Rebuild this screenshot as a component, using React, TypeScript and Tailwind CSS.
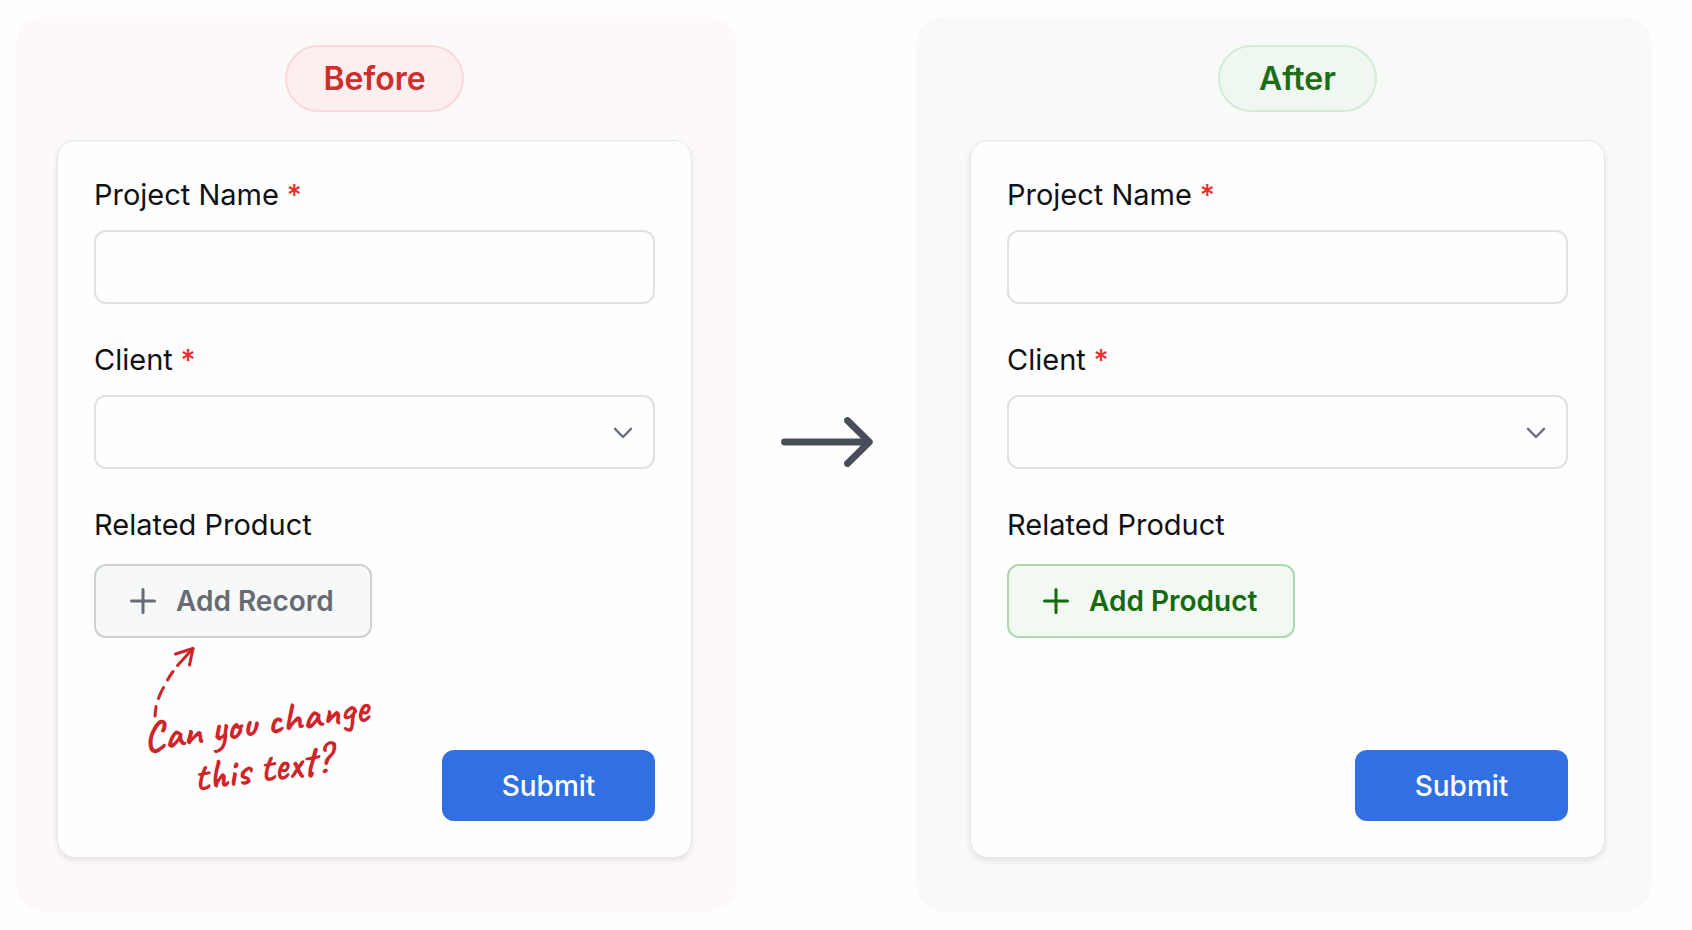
import { useId } from "react";
import type { ReactNode } from "react";

type Tone = "before" | "after";

const panelTone: Record<Tone, string> = {
  before: "bg-[#fdf9f9] pl-[41px] pr-[45px]",
  after: "bg-[#f8faf7] pl-[54px] pr-[47px]",
};

const headerTone: Record<Tone, string> = {
  before: "",
  after: "pl-5",
};

const badgeTone: Record<Tone, string> = {
  before: "border-[#f8dada] bg-[#fdefef] px-9 text-[#cf2e2e]",
  after: "border-[#d4ecd5] bg-[#eef8f0] px-[39px] text-[#1f6b17]",
};

const addTone: Record<Tone, string> = {
  before: "border-[#ced1d5] bg-[#f7f8f8] text-[#666b74]",
  after: "border-[#aed7b0] bg-[#f2f9f3] text-[#17690f]",
};

function Required() {
  return <span className="font-medium text-[#ee2b2b]"> *</span>;
}

function PlusIcon() {
  return (
    <svg width="26" height="26" viewBox="0 0 26 26" fill="none" stroke="currentColor" strokeWidth="3" strokeLinecap="round" aria-hidden="true">
      <path d="M13 1.500v23M1.500 13h23" />
    </svg>
  );
}

function Annotation() {
  return (
    <div className="pointer-events-none absolute left-[50px] top-full text-[#cf2428]">
      <svg className="ml-2 mt-2" width="44" height="74" viewBox="0 0 44 74" fill="none" stroke="currentColor" strokeWidth="3" strokeLinecap="round" strokeLinejoin="round" aria-hidden="true">
        <path d="M3 70 4 60.500M6.500 52.500Q8.500 46.500 11.500 41.500M15.500 34Q18 29.500 21 25.500M25.500 19.500 41 2.500" />
        <path d="M23.500 8 41 2.500 37.500 19" />
      </svg>
      <p className="-mt-5 w-[230px] -rotate-8 whitespace-nowrap text-center font-['Caveat','Lato',cursive] text-[42px] font-bold leading-[46px]">
        Can you change
        <br />
        this text?
      </p>
    </div>
  );
}

function FormCard({ tone, action, children }: { tone: Tone; action: string; children?: ReactNode }) {
  const id = useId();
  return (
    <form
      onSubmit={(e) => e.preventDefault()}
      className="flex flex-col rounded-[18px] border border-[#e5e7ea] bg-[#fefefe] p-9 text-[28px] leading-9 text-[#0f1115] shadow-[0_3px_6px_rgba(0,0,0,0.09)]"
    >
      <label htmlFor={`${id}-name`} className="text-[29px]">
        Project Name
        <Required />
      </label>
      <input id={`${id}-name`} type="text" className="mt-[17px] h-[74px] w-full rounded-xl border-2 border-[#dfe1e4] bg-transparent px-6" />

      <label htmlFor={`${id}-client`} className="mt-[38px] text-[29px]">
        Client
        <Required />
      </label>
      <div className="relative mt-[17px]">
        <select id={`${id}-client`} className="block h-[74px] w-full appearance-none rounded-xl border-2 border-[#dfe1e4] bg-transparent px-6">
          <option value="" />
        </select>
        <svg className="pointer-events-none absolute right-[22px] top-8" width="20" height="12" viewBox="0 0 20 12" fill="none" stroke="#6b7180" strokeWidth="2.4" strokeLinecap="round" strokeLinejoin="round" aria-hidden="true">
          <path d="M2 1.800 10 10 18 1.800" />
        </svg>
      </div>

      <p id={`${id}-related`} className="mt-[38px] text-[29px]">
        Related Product
      </p>
      <div className="relative mt-[21px] self-start">
        <button
          type="button"
          aria-describedby={`${id}-related`}
          className={`flex h-[74px] items-center gap-5 rounded-xl border-2 pl-[34px] pr-9 font-semibold ${addTone[tone]}`}
        >
          <PlusIcon />
          {action}
        </button>
        {children}
      </div>

      <button type="submit" className="mt-28 h-[71px] w-[213px] self-end rounded-xl bg-[#3070e3] font-medium text-white">
        Submit
      </button>
    </form>
  );
}

function Panel({ tone, title, children }: { tone: Tone; title: string; children: ReactNode }) {
  return (
    <section className={`rounded-[28px] pb-[54px] pt-7 ${panelTone[tone]}`}>
      <header className={`mb-7 flex justify-center ${headerTone[tone]}`}>
        <h2 className={`flex h-[67px] items-center rounded-full border-2 text-[32px] font-semibold ${badgeTone[tone]}`}>{title}</h2>
      </header>
      {children}
    </section>
  );
}

export default function App() {
  return (
    <main className="grid min-h-screen grid-cols-[721fr_179fr_736fr] bg-[#fefefe] pb-[18px] pl-4 pr-10 pt-[17px] font-['Inter',sans-serif]">
      <Panel tone="before" title="Before">
        <FormCard tone="before" action="Add Record">
          <Annotation />
        </FormCard>
      </Panel>
      <div className="flex items-center justify-center pb-[46px]">
        <svg width="92" height="52" viewBox="0 0 92 52" fill="none" stroke="#474e59" strokeWidth="6.800" strokeLinecap="round" strokeLinejoin="round" role="img" aria-label="becomes">
          <path d="M3.500 26H88M66.500 4.500 88.300 26 66.500 47.500" />
        </svg>
      </div>
      <Panel tone="after" title="After">
        <FormCard tone="after" action="Add Product" />
      </Panel>
    </main>
  );
}
